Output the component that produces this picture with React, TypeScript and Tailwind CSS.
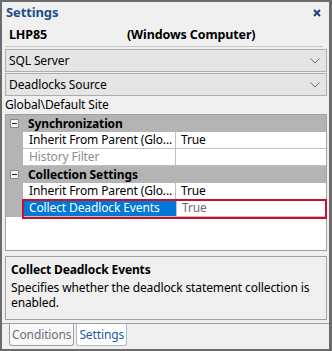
import React from 'react';

const font = { fontFamily: '"Segoe UI", "Noto Sans", sans-serif' };

const Chevron: React.FC = () => (
  <svg width="10" height="6" viewBox="0 0 10 6" className="shrink-0">
    <path d="M0.5 0.5 L5 5 L9.5 0.5" fill="none" stroke="#6a6a6a" strokeWidth="1" />
  </svg>
);

const CloseIcon: React.FC = () => (
  <svg width="8" height="8" viewBox="0 0 8 8">
    <path d="M1 1 L7 7 M7 1 L1 7" stroke="#1f3f7a" strokeWidth="2" />
  </svg>
);

const Minus: React.FC = () => (
  <div className="w-[9px] h-[9px] border border-[#8a8a8a] bg-[#f4f4f4] flex items-center justify-center">
    <div className="w-[5px] h-px bg-[#222]" />
  </div>
);

const Dropdown: React.FC<{ label: string }> = ({ label }) => (
  <div className="h-[23px] border border-[#adadad] bg-[#e5e5e5] flex items-center justify-between pl-[3px] pr-[6px] text-black">
    <span>{label}</span>
    <Chevron />
  </div>
);

const Category: React.FC<{ label: string }> = ({ label }) => (
  <div className="h-[17px] bg-[#b4b4b4] flex items-center">
    <div className="w-[17px] flex justify-center">
      <Minus />
    </div>
    <span className="ml-[5px] font-bold text-black">{label}</span>
  </div>
);

const Row: React.FC<{ name: string; value: string; disabled?: boolean; selected?: boolean }> = ({
  name,
  value,
  disabled,
  selected,
}) => (
  <div className="relative h-[17px] flex">
    <div className="w-[17px] bg-[#b4b4b4] shrink-0" />
    <div className="flex-1 flex border-b border-[#c0c0c0] bg-white">
      <div
        className={`w-[153px] border-r border-[#c0c0c0] flex items-center overflow-hidden whitespace-nowrap ${
          selected ? 'bg-[#0078d7] text-white pl-[5px] ml-[1px]' : 'pl-[6px]'
        } ${disabled ? 'text-[#8d8d8d]' : selected ? '' : 'text-black'}`}
      >
        {name}
      </div>
      <div className={`flex-1 flex items-center pl-[5px] ${selected ? 'text-[#6d6d6d]' : 'text-black'}`}>{value}</div>
    </div>
    {selected && (
      <div className="absolute left-[16px] right-[-1px] top-[-1px] bottom-[-2px] border-2 border-[#c8102e]" />
    )}
  </div>
);

const App: React.FC = () => {
  return (
    <div
      style={font}
      className="w-[332px] h-[351px] border-t-2 border-l-2 border-r-[3px] border-b-2 border-[#6b6b6b] bg-[#f0f0f0] flex flex-col text-[12px] tracking-[-0.12px]"
    >
      {/* Title */}
      <div className="h-[22px] flex items-center justify-between pl-[4px] pr-[8px]">
        <span className="text-[13px] font-bold text-[#1f4e8c]">Settings</span>
        <CloseIcon />
      </div>

      {/* Host */}
      <div className="h-[22px] flex items-center pl-[7px] text-[12.5px] font-bold text-black">
        <span className="w-[118px]">LHP85</span>
        <span>(Windows Computer)</span>
      </div>
      <div className="ml-[3px] mr-[6px] border-t border-[#c8c8c8]" />

      <div className="px-[3px] pr-[2px] mt-[2px] flex flex-col gap-px">
        <Dropdown label="SQL Server" />
        <Dropdown label="Deadlocks Source" />
      </div>

      <div className="h-[18px] pl-[3px] flex items-center text-black">Global\Default Site</div>

      {/* Property grid */}
      <div className="ml-[3px] mr-[2px] h-[137px] border border-[#a0a0a0] bg-white flex flex-col">
        <Category label="Synchronization" />
        <Row name="Inherit From Parent (Glo..." value="True" />
        <Row name="History Filter" value="" disabled />
        <Category label="Collection Settings" />
        <Row name="Inherit From Parent (Glo..." value="True" />
        <Row name="Collect Deadlock Events" value="True" selected />
      </div>

      {/* Description */}
      <div className="ml-[3px] mr-[2px] mt-[5px] h-[64px] border border-[#a0a0a0] bg-[#f0f0f0] px-[5px] pt-[5px] text-black leading-[15px]">
        <div className="font-bold">Collect Deadlock Events</div>
        <div className="mt-[3px]">Specifies whether the deadlock statement collection is enabled.</div>
      </div>

      {/* Tabs */}
      <div className="mt-[3px] border-t border-[#a0a0a0] flex pl-[7px] gap-[2px]">
        <div className="h-[22px] px-[2px] border border-t-0 border-[#a0a0a0] rounded-b-[3px] bg-[#f8f8f8] text-[#6a6f7a] flex items-center">
          Conditions
        </div>
        <div className="h-[22px] px-[2px] border border-t-0 border-[#a9b8cc] rounded-b-[3px] bg-white text-[#1c5aa8] flex items-center">
          Settings
        </div>
      </div>
    </div>
  );
};

export default App;
